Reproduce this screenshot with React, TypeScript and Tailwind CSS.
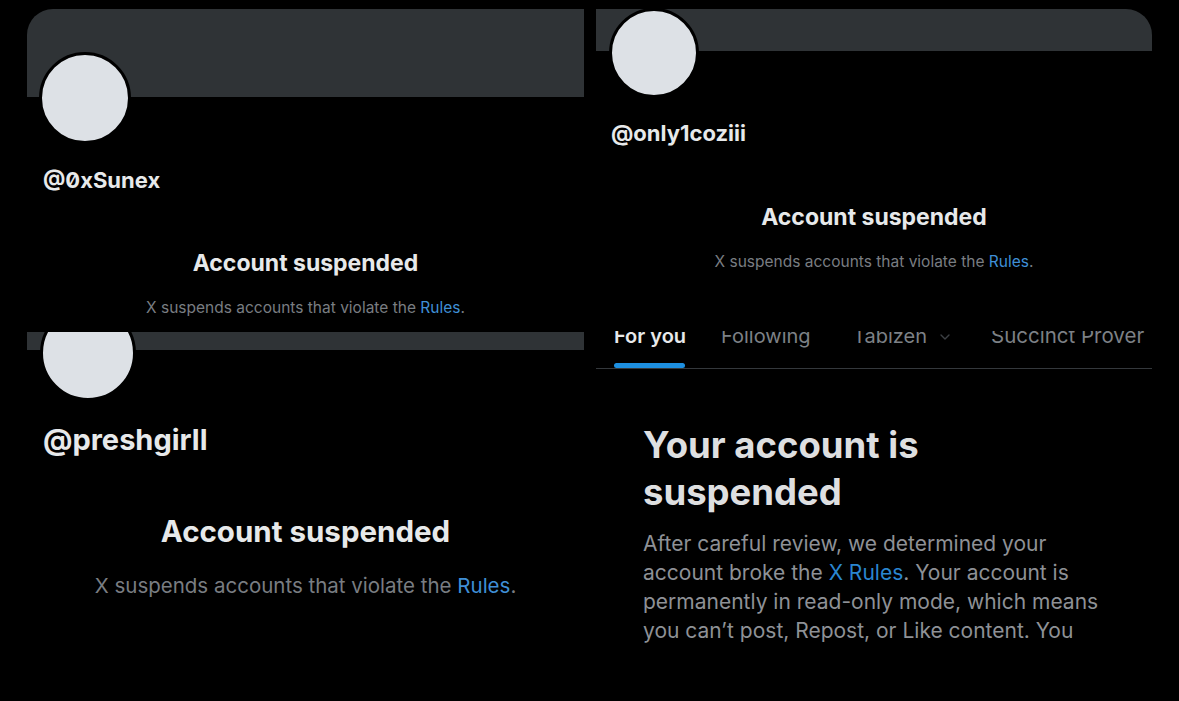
import { ChevronDown } from "lucide-react";

const font = "font-['Inter','Noto_Sans',sans-serif]";

function Avatar({ className }: { className: string }) {
    return <div className={`relative rounded-full border-[3px] border-black bg-[#dde1e6] ${className}`} />;
}

function Rules() {
    return <span className="text-[#3f8fd6]">Rules</span>;
}

export default function App() {
    return (
        <div className={`w-[1179px] h-[701px] bg-black overflow-hidden flex gap-[12px] pl-[27px] pt-[9px] ${font}`}>
            {/* left column */}
            <div className="w-[557px] flex flex-col">
                {/* @0xSunex */}
                <div className="h-[323px] flex flex-col">
                    <div className="h-[88px] bg-[#2f3336] rounded-tl-[26px]" />
                    <Avatar className="w-[92px] h-[92px] -mt-[45px] ml-[12px]" />
                    <p className="mt-[22px] ml-[16px] text-[22px] leading-[28px] font-bold text-[#e7e9ea] [font-feature-settings:'zero']">
                        @0xSunex
                    </p>
                    <p className="mt-[54px] text-center text-[23px] leading-[30px] font-bold text-[#e7e9ea]">Account suspended</p>
                    <p className="mt-[20px] text-center text-[15.5px] leading-[20px] text-[#797d82]">
                        X suspends accounts that violate the <Rules />.
                    </p>
                </div>

                {/* @preshgirll */}
                <div className="flex-1 flex flex-col overflow-hidden">
                    <div className="h-[18px] shrink-0 bg-[#2f3336]" />
                    <Avatar className="w-[96px] h-[96px] shrink-0 -mt-[45px] ml-[13px]" />
                    <p className="mt-[21px] ml-[16px] text-[29px] leading-[36px] font-bold text-[#e7e9ea]">@preshgirll</p>
                    <p className="mt-[54px] text-center text-[29.5px] leading-[38px] font-bold text-[#e7e9ea]">Account suspended</p>
                    <p className="mt-[23px] text-center text-[20.5px] leading-[26px] text-[#797d82]">
                        X suspends accounts that violate the <Rules />.
                    </p>
                </div>
            </div>

            {/* right column */}
            <div className="w-[556px] flex flex-col">
                {/* @only1coziii */}
                <div className="h-[322px] flex flex-col">
                    <div className="h-[42px] bg-[#2f3336] rounded-tr-[26px]" />
                    <Avatar className="w-[90px] h-[90px] -mt-[43px] ml-[13px]" />
                    <p className="mt-[21px] ml-[15px] text-[22px] leading-[28px] font-bold text-[#e7e9ea]">@only1coziii</p>
                    <p className="mt-[55px] text-center text-[23px] leading-[30px] font-bold text-[#e7e9ea]">Account suspended</p>
                    <p className="mt-[20px] text-center text-[15.5px] leading-[20px] text-[#797d82]">
                        X suspends accounts that violate the <Rules />.
                    </p>
                </div>

                {/* suspended notice */}
                <div className="flex-1 flex flex-col overflow-hidden">
                    <div className="-mt-[7px] pl-[18px] flex border-b border-[#34383c] text-[20px] leading-[24px] whitespace-nowrap">
                        <div className="w-[107px] flex flex-col">
                            <span className="font-semibold text-[#e7e9ea]">For you</span>
                            <span className="mt-[15px] w-[71px] h-[5px] rounded-full bg-[#1d8fe0]" />
                        </div>
                        <span className="w-[132px] text-[#7d8186]">Following</span>
                        <span className="w-[138px] flex items-start gap-[10px] text-[#7d8186]">
                            Tabizen
                            <ChevronDown size={16} strokeWidth={2} className="mt-[5px] text-[#3d4044]" />
                        </span>
                        <span className="text-[20.5px] text-[#7d8186]">Succinct Prover</span>
                    </div>

                    <div className="pl-[47px]">
                        <h1 className="mt-[53px] text-[36.5px] leading-[47px] font-bold text-[#dedfe0]">
                            Your account is
                            <br />
                            suspended
                        </h1>
                        <div className="mt-[13px] text-[21px] leading-[29px] text-[#8e9196] whitespace-nowrap">
                            <p>After careful review, we determined your</p>
                            <p>
                                account broke the <span className="text-[#2a86d0]">X Rules</span>. Your account is
                            </p>
                            <p>permanently in read-only mode, which means</p>
                            <p>you can’t post, Repost, or Like content. You</p>
                        </div>
                    </div>
                </div>
            </div>
        </div>
    );
}
